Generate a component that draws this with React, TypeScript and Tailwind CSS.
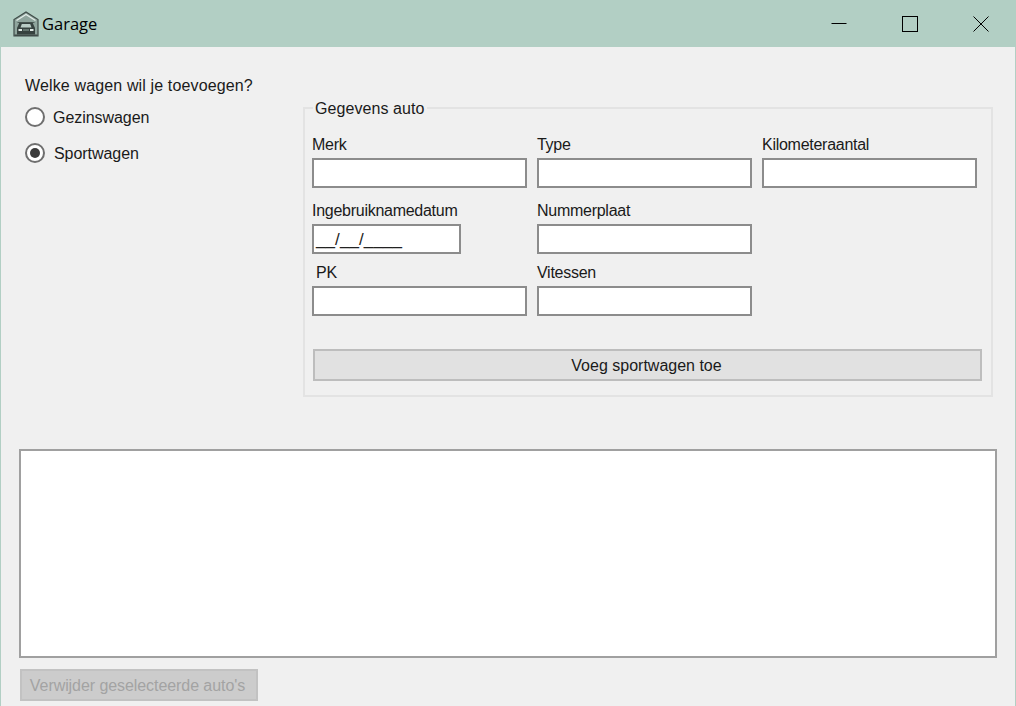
const font = "font-['Liberation_Sans','Arial',sans-serif]";

function GarageIcon() {
  return (
    <svg width="26" height="26" viewBox="0 0 26 26" fill="none" className="shrink-0">
      <path d="M1 25V8.500L13 1l12 7.500V25z" fill="#8fa59d" stroke="#3f4b48" strokeWidth="1.200" />
      <path d="M3.500 9.500 13 3.500l9.500 6" stroke="#e4ece9" strokeWidth="1.300" />
      <path d="M4.500 11.500h17" stroke="#51605b" strokeWidth="1" />
      <path d="M4 17l2.500-5.500h13L22 17v6.500H4z" fill="#36423f" />
      <path d="M7.500 16.500l1.300-3.500h8.400l1.300 3.500z" fill="#b9cdc6" />
      <rect x="5.500" y="18" width="3.500" height="2" fill="#dfe9e5" />
      <rect x="17" y="18" width="3.500" height="2" fill="#dfe9e5" />
      <rect x="10" y="18.500" width="6" height="1" fill="#8fa59d" />
      <rect x="1.500" y="23.500" width="23" height="1.500" fill="#3f4b48" />
    </svg>
  );
}

function TitleButton({ children }: { children: React.ReactNode }) {
  return <div className="w-[71px] h-full flex items-center justify-center">{children}</div>;
}

function Radio({ label, checked, gap }: { label: string; checked?: boolean; gap: string }) {
  return (
    <div className={`flex items-center h-5 ${gap}`}>
      <div className="w-5 h-5 rounded-full border-2 border-[#6f6f6f] bg-white flex items-center justify-center">
        {checked && <div className="w-[10px] h-[10px] rounded-full bg-[#3a3a3a]" />}
      </div>
      <span className="leading-[22px] h-5 tracking-[-0.05px]">{label}</span>
    </div>
  );
}

function Field({ label, className = "", inputClass = "w-[215px]", children }: { label: string; className?: string; inputClass?: string; children?: React.ReactNode }) {
  return (
    <div className="flex flex-col">
      <div className={`h-5 leading-[22px] tracking-[-0.27px] whitespace-nowrap ${className}`}>{label}</div>
      <div className={`${inputClass} h-[30px] mt-1 bg-white border-2 border-[#8c8c8c] flex items-center px-[1px]`}>{children}</div>
    </div>
  );
}

export default function App() {
  return (
    <div className={`w-[1016px] h-[706px] flex flex-col overflow-hidden bg-[#f0f0f0] text-[16px] text-[#1a1a1a] ${font}`}>
      <header className="h-[47px] shrink-0 bg-[#b2cfc4] flex items-center pl-[13px]">
        <GarageIcon />
        <span className="ml-[3px] mt-[2px] text-[16.5px] text-black font-['Open_Sans',sans-serif]">Garage</span>
        <div className="ml-auto h-full flex">
          <TitleButton>
            <svg width="16" height="16" viewBox="0 0 16 16"><path d="M0.500 7.500h15" stroke="#000" /></svg>
          </TitleButton>
          <TitleButton>
            <svg width="16" height="16" viewBox="0 0 16 16" fill="none"><rect x="0.500" y="0.500" width="15" height="15" stroke="#000" /></svg>
          </TitleButton>
          <TitleButton>
            <svg width="16" height="16" viewBox="0 0 16 16"><path d="M0.500 0.500l15 15M15.500 0.500l-15 15" stroke="#000" /></svg>
          </TitleButton>
        </div>
      </header>

      <main className="flex-1 flex flex-col border-x border-[#b2cfc4] px-[18px]">
        <div className="flex h-[350px] shrink-0">
          <div className="w-[284px] shrink-0 pl-[6px] pt-[28px]">
            <div className="h-5 leading-[22px] tracking-[0.14px]">Welke wagen wil je toevoegen?</div>
            <div className="flex flex-col gap-4 mt-[12px]">
              <Radio label="Gezinswagen" gap="gap-2" />
              <Radio label="Sportwagen" checked gap="gap-[9px]" />
            </div>
          </div>
          <fieldset className="mt-[51px] w-[690px] h-[299px] border-2 border-[#e3e3e3] pl-[7px] pr-0 min-w-0">
            <legend className="ml-[1px] px-[2px] h-5 leading-[22px] tracking-[0.08px]">Gegevens auto</legend>
            <div className="grid grid-cols-[215px_215px_215px] gap-x-[10px] mt-[16px]">
              <Field label="Merk" />
              <Field label="Type" />
              <Field label="Kilometeraantal" />
            </div>
            <div className="grid grid-cols-[215px_215px_215px] gap-x-[10px] mt-[12px]">
              <Field label="Ingebruiknamedatum" inputClass="w-[149px]">
                <span className="text-[17px] leading-none text-[#222] ml-[1px] tracking-[0.1px]">__/__/____</span>
              </Field>
              <Field label="Nummerplaat" />
            </div>
            <div className="grid grid-cols-[215px_215px_215px] gap-x-[10px] mt-[8px]">
              <Field label="PK" className="pl-[4px]" />
              <Field label="Vitessen" />
            </div>
            <button className="mt-[33px] ml-[1px] w-[669px] h-[32px] pt-[2px] pr-[2px] bg-[#e1e1e1] border-2 border-[#bdbdbd] flex items-center justify-center">
              Voeg sportwagen toe
            </button>
          </fieldset>
        </div>

        <div className="mt-[52px] w-[978px] h-[209px] shrink-0 bg-white border-2 border-[#a0a0a0]" />

        <button disabled className="mt-[11px] ml-[1px] w-[238px] h-[32px] shrink-0 pt-[2px] pr-[3px] bg-[#cccccc] border-2 border-[#c2c2c2] text-[#a3a3a3] tracking-[-0.07px] flex items-center justify-center">
          Verwijder geselecteerde auto's
        </button>
      </main>
    </div>
  );
}
